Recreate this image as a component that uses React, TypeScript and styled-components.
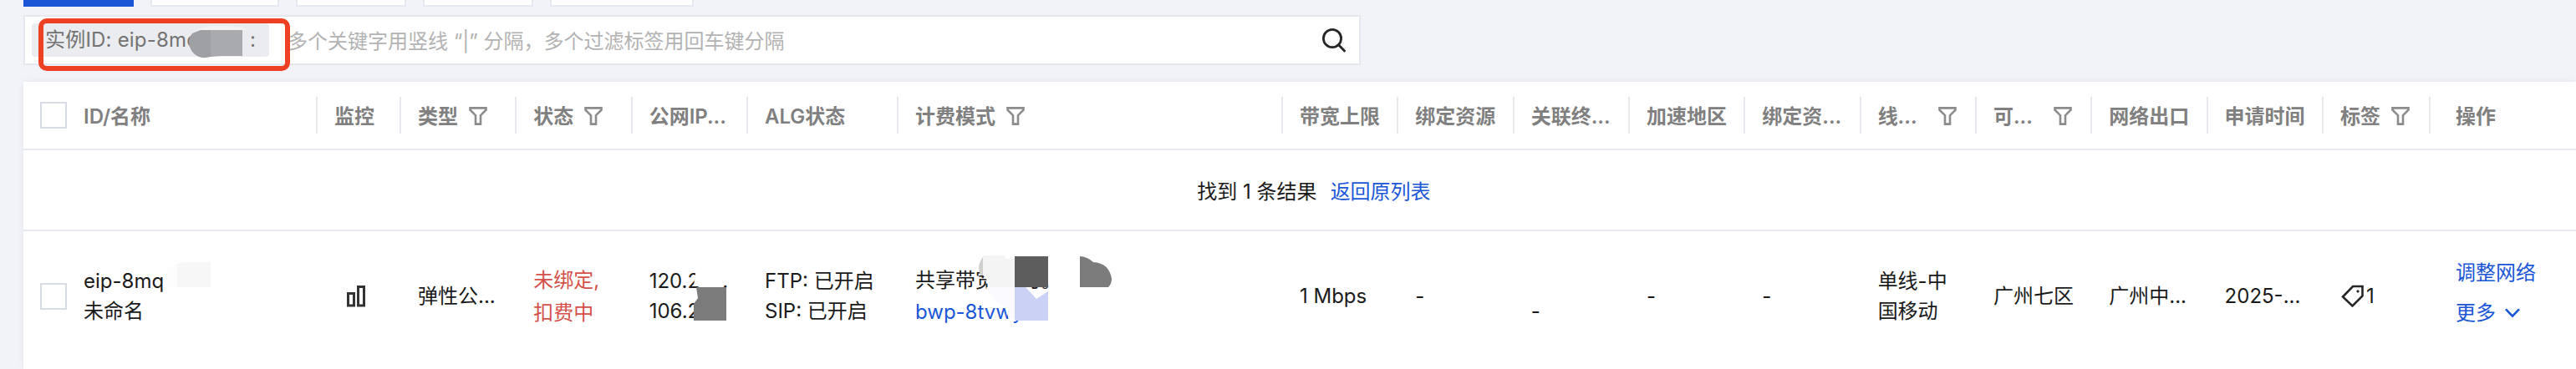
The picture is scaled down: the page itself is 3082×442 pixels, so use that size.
import { FC, ReactNode } from 'react';
import styled, { createGlobalStyle } from 'styled-components';

const GlobalStyle = createGlobalStyle`
	* {
		box-sizing: border-box;
	}

	body {
		margin: 0;
		background: #f2f3f8;
		color: #1a1a1a;
		font-family: Inter, 'Noto Sans CJK SC', sans-serif;
		font-size: 24px;
		line-height: 36px;
		overflow: hidden;
	}
`;

const Page = styled.div`
	height: 442px;
	padding-left: 28px;
	overflow: hidden;
`;

const Tabs = styled.div`
	display: flex;
	gap: 20px;
	height: 8px;
`;

const Tab = styled.div<{ $width: number; $active?: boolean }>`
	width: ${({ $width }) => $width}px;
	height: 8px;
	background: ${({ $active }) => ($active ? '#1a56d6' : '#fff')};
	border: ${({ $active }) => ($active ? 'none' : '2px solid #e6e8ef')};
	border-top: none;
`;

const SearchBox = styled.div`
	position: relative;
	display: flex;
	align-items: center;
	width: 1600px;
	height: 60px;
	margin-top: 10px;
	padding: 0 15px 0 8px;
	background: #fff;
	border: 2px solid #e6e8ef;
`;

const Chip = styled.div`
	display: flex;
	justify-content: space-between;
	width: 284px;
	height: 40px;
	padding: 0 16px;
	border-radius: 4px;
	background: #ebecf0;
	color: #737373;
	line-height: 40px;
	white-space: pre;
	letter-spacing: 0.2px;
`;

const Placeholder = styled.span`
	flex: 1;
	margin: 3px 0 0 22px;
	color: #b3b3b3;
	white-space: pre;
`;

const Highlight = styled.div`
	position: absolute;
	left: 16px;
	top: 2px;
	width: 301px;
	height: 63px;
	border: 6px solid #ee4023;
	border-radius: 10px;
`;

const Mask = styled.svg<{ $left: number; $top: number }>`
	position: absolute;
	left: ${({ $left }) => $left}px;
	top: ${({ $top }) => $top}px;
`;

const Table = styled.div`
	margin-top: 20px;
	height: 344px;
	background: #fff;
	box-shadow: 0 0 8px rgba(30, 40, 90, 0.06);
`;

const columns =
	'52px 300px 100px 138.33px 138.33px 138.34px 180px 460px repeat(9, 138.33px) 128px 174px';

const HeadRow = styled.div`
	display: grid;
	grid-template-columns: ${columns};
	align-items: center;
	height: 82px;
	border-bottom: 2px solid #e6e9ef;
	color: #808080;
	font-weight: 600;
`;

const HeadCell = styled.div<{ $last?: boolean }>`
	display: flex;
	align-items: center;
	height: 44px;
	padding: 0 ${({ $last }) => ($last ? 0 : 18)}px 0 ${({ $last }) => ($last ? 30 : 20)}px;
	border-right: ${({ $last }) => ($last ? 'none' : '2px solid #e8e9ef')};
	white-space: nowrap;

	svg {
		margin: 2px 0 0 13px;
	}
`;

const HeadLabel = styled.span<{ $width?: number; $filter?: boolean }>`
	width: ${({ $width }) => ($width ? `${$width}px` : 'auto')};
	margin-top: ${({ $filter }) => ($filter ? 4 : 3)}px;
`;

const ResultRow = styled.div`
	display: flex;
	justify-content: center;
	gap: 16px;
	height: 97px;
	padding: 32px 0 0 34px;
	border-bottom: 2px solid #e6e9ef;
`;

const Link = styled.span`
	color: #1a56d6;
`;

const DataRow = styled.div`
	display: grid;
	grid-template-columns: ${columns};
	align-items: center;
	height: 156px;
`;

const Cell = styled.div<{ $line?: number; $color?: string; $left?: number; $bottom?: number }>`
	position: relative;
	padding-left: ${({ $left = 20 }) => $left}px;
	padding-bottom: ${({ $bottom = 0 }) => $bottom}px;
	color: ${({ $color }) => $color || 'inherit'};
	line-height: ${({ $line = 36 }) => $line}px;
	white-space: pre;
`;

const IconLine = styled.div<{ $gap?: number }>`
	display: flex;
	align-items: center;
	gap: ${({ $gap = 0 }) => $gap}px;
`;

const Checkbox = styled.div`
	width: 32px;
	height: 32px;
	margin-left: 20px;
	border: 2px solid #d7dce4;
	background: #fff;
`;

const FunnelIcon: FC = () => (
	<svg width="22" height="22" viewBox="0 0 22 22" fill="none" stroke="#8c8c8c" strokeWidth="2.6">
		<path d="M1.5 1.4H20.5V3.6L14 10.2V20.6H8V10.2L1.5 3.6Z" />
	</svg>
);

const SearchIcon: FC = () => (
	<svg width="30" height="30" viewBox="0 0 30 30" fill="none" stroke="#262626" strokeWidth="2.8">
		<circle cx="13" cy="13" r="10.6" />
		<path d="M20.6 20.8L27.6 28" strokeLinecap="round" />
	</svg>
);

const ChartIcon: FC = () => (
	<svg width="22" height="26" viewBox="0 0 22 26" fill="none" stroke="#333" strokeWidth="3">
		<path d="M1.5 9.5H8.5V24H1.5ZM13.5 1.5H20.5V24H13.5Z" />
	</svg>
);

const TagIcon: FC = () => (
	<svg width="28" height="28" viewBox="0 0 28 28" fill="none" stroke="#262626" strokeWidth="2.6">
		<path d="M15 2H26.5V13.5L14.5 25.5L3 14.5Z" />
		<path d="M20 7H22V9H20Z" fill="#262626" strokeWidth="1" />
	</svg>
);

const ChevronIcon: FC = () => (
	<svg width="18" height="12" viewBox="0 0 18 12" fill="none" stroke="#1a56d6" strokeWidth="2.6">
		<path d="M1 1.4L9 9.6L17 1.4" />
	</svg>
);

interface Column {
	label: string;
	filter?: boolean;
	labelWidth?: number;
}

const headColumns: Column[] = [
	{ label: 'ID/名称' },
	{ label: '监控' },
	{ label: '类型', filter: true },
	{ label: '状态', filter: true },
	{ label: '公网IP...' },
	{ label: 'ALG状态' },
	{ label: '计费模式', filter: true },
	{ label: '带宽上限' },
	{ label: '绑定资源' },
	{ label: '关联终...' },
	{ label: '加速地区' },
	{ label: '绑定资...' },
	{ label: '线...', filter: true, labelWidth: 59 },
	{ label: '可...', filter: true, labelWidth: 59 },
	{ label: '网络出口' },
	{ label: '申请时间' },
	{ label: '标签', filter: true },
	{ label: '操作' },
];

const IdCell: FC = () => (
	<Cell>
		{'eip-8mq\n未命名'}
		<Mask $left={116} $top={-5} width="60" height="32">
			<path d="M0 16Q8 0 28 0H56V30H0Z" fill="#fdfdfd" />
			<path d="M16 2Q22 0 28 0H56V30H16Z" fill="#f7f7f7" />
		</Mask>
	</Cell>
);

const IpCell: FC = () => (
	<Cell>
		{'120.2    .\n106.2'}
		<Mask $left={70} $top={3} width="44" height="63">
			<path d="M6 0H38V20H3Z" fill="#fff" />
			<path d="M6 22H42V62H3V42L8 35Z" fill="#7b7b7b" />
		</Mask>
	</Cell>
);

const BillingCell: FC = () => (
	<Cell $line={38}>
		{'共享带宽 包月。\n'}
		<Link>bwp-8tvwy</Link>
		<Mask $left={96} $top={-11} width="164" height="80">
			<path d="M5 2Q-3 12 2 24L8 24V0Z" fill="#cfcfcf" />
			<path d="M5 2Q7 0 12 0H30L34 5Q38 2 43 2V38H14Q8 25 5 24Z" fill="#f4f4f4" />
			<path d="M9 38Q18 58 35 64V75L39 77H43V38Z" fill="#fafaff" />
			<path d="M83 1H121V36H83Z" fill="#fff" />
			<path d="M43 1H83V38H43Z" fill="#5d5d5d" />
			<path d="M43 38H56L69 52L83 43V78H43Z" fill="#cbd1f5" />
			<path d="M121 1Q129 1 137 8Q156 9 159 28Q159 34 155 38H121Z" fill="#7b7b7b" />
		</Mask>
	</Cell>
);

const dataCells: ReactNode[] = [
	<IdCell key="id" />,
	<Cell key="monitor" $left={35}>
		<IconLine>
			<ChartIcon />
		</IconLine>
	</Cell>,
	<Cell key="type">弹性公...</Cell>,
	<Cell key="status" $line={39} $color="#d4504b">
		{'未绑定,\n扣费中'}
	</Cell>,
	<IpCell key="ip" />,
	<Cell key="alg">{'FTP: 已开启\nSIP: 已开启'}</Cell>,
	<BillingCell key="billing" />,
	<Cell key="bandwidth">1 Mbps</Cell>,
	<Cell key="resource">-</Cell>,
	<Cell key="terminal">{' \n-'}</Cell>,
	<Cell key="region">-</Cell>,
	<Cell key="bound">-</Cell>,
	<Cell key="line">{'单线-中\n国移动'}</Cell>,
	<Cell key="zone">广州七区</Cell>,
	<Cell key="exit">广州中...</Cell>,
	<Cell key="created">2025-...</Cell>,
	<Cell key="tags">
		<IconLine $gap={3}>
			<TagIcon />1
		</IconLine>
	</Cell>,
	<Cell key="actions" $left={30} $line={48} $bottom={8} $color="#1a56d6">
		调整网络
		<IconLine $gap={11}>
			更多
			<ChevronIcon />
		</IconLine>
	</Cell>,
];

const Search: FC = () => (
	<SearchBox>
		<Chip>
			<span>实例ID: eip-8mq</span>
			<span>:</span>
		</Chip>
		<Placeholder>多个关键字用竖线 “|” 分隔，多个过滤标签用回车键分隔</Placeholder>
		<SearchIcon />
		<Mask $left={194} $top={10} width="86" height="42">
			<path d="M12 6Q18 1 38 1Q66 1 72 6Z" fill="#f3f3f6" />
			<path d="M16 6H28V38Q14 42 6 32Q-2 20 6 10Z" fill="#9fa0a4" />
			<path d="M28 6H66V37H40L28 38Z" fill="#a9aaad" />
		</Mask>
		<Highlight />
	</SearchBox>
);

const App: FC = () => (
	<>
		<GlobalStyle />
		<Page>
			<Tabs>
				<Tab $width={132} $active />
				<Tab $width={154} />
				<Tab $width={132} />
				<Tab $width={132} />
				<Tab $width={172} />
			</Tabs>
			<Search />
			<Table>
				<HeadRow>
					<Checkbox />
					{headColumns.map(({ label, filter, labelWidth }, i) => (
						<HeadCell key={i} $last={i === headColumns.length - 1}>
							<HeadLabel $width={labelWidth} $filter={filter}>
								{label}
							</HeadLabel>
							{filter && <FunnelIcon />}
						</HeadCell>
					))}
				</HeadRow>
				<ResultRow>
					<span>找到 1 条结果</span>
					<Link>返回原列表</Link>
				</ResultRow>
				<DataRow>
					<Checkbox />
					{dataCells}
				</DataRow>
			</Table>
		</Page>
	</>
);

export default App;
